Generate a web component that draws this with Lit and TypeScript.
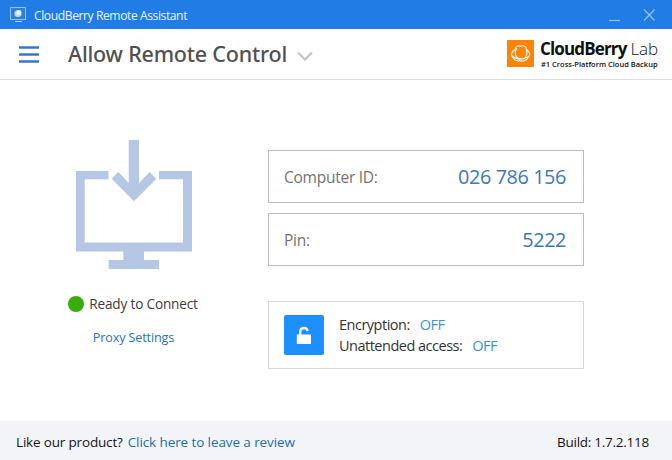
import { LitElement, html, css } from "lit";
import { customElement, property } from "lit/decorators.js";

@customElement("title-bar")
class TitleBar extends LitElement {
  static styles = css`
    :host { display: flex; align-items: center; height: 29px; box-sizing: border-box; padding: 0 16px 0 10px; background: #217ce5; color: #e4f5ff; }
    .app { width: 16px; height: 17px; margin-top: 1px; }
    .name { font-size: 12.2px; line-height: 18px; margin: 2px 0 0 8px; letter-spacing: -0.46px; white-space: nowrap; }
    .controls { margin-left: auto; width: 48px; height: 14px; margin-top: 1px; }
    svg { display: block; }
  `;
  render() {
    return html`
      <svg class="app" viewBox="0 0 16 17">
        <rect x="0.5" y="0.5" width="15" height="12" fill="#2d7fdc" stroke="#8cc4f4" />
        <path d="M5 14.500h7" stroke="#b5dcfa" />
        <circle cx="8" cy="6.500" r="3.6" fill="#b8dcf8" />
        <circle cx="9" cy="5.500" r="2.3" fill="#f1faff" />
      </svg>
      <span class="name">CloudBerry Remote Assistant</span>
      <svg class="controls" viewBox="0 0 48 14">
        <path d="M1 12.500h11" stroke="#8fc6fb" stroke-width="1.2" />
        <path d="M36 1.500l10.500 11M46.500 1.500l-10.500 11" stroke="#90c6f8" stroke-width="1.2" />
      </svg>
    `;
  }
}

@customElement("page-header")
class PageHeader extends LitElement {
  static styles = css`
    :host { display: flex; align-items: center; height: 51px; box-sizing: border-box; padding: 0 14px 0 19px; border-bottom: 1px solid #dedede; background: #fff; }
    svg { display: block; flex: none; }
    .menu { width: 20px; height: 17px; margin-top: 1px; }
    h1 { margin: 0 0 0 29px; font: 500 21.500px/30px "Noto Sans", "Open Sans", sans-serif; letter-spacing: -0.2px; color: #505050; white-space: nowrap; }
    .chevron { width: 16px; height: 10px; margin: 4px 0 0 10px; }
    .brand { display: flex; margin-left: auto; gap: 6px; }
    .logo { width: 27px; height: 27px; margin-top: 1px; }
    .words { display: flex; flex-direction: column; width: 118px; color: #111; white-space: nowrap; }
    .big { display: flex; gap: 4px; font: 400 17px/20px "Open Sans", sans-serif; }
    .big b { font-weight: 700; letter-spacing: -0.85px; }
    .tag { font: 600 7.500px/10px "Open Sans", sans-serif; padding-left: 1px; }
    .light { font-weight: 300; letter-spacing: -0.2px; }
  `;
  render() {
    return html`
      <svg class="menu" viewBox="0 0 20 17"><path d="M0 1.500h20M0 8.500h20M0 15.500h20" stroke="#3478c8" stroke-width="2.300" /></svg>
      <h1>Allow Remote Control</h1>
      <svg class="chevron" viewBox="0 0 16 10"><path d="M1 1.5l7 7 7-7" fill="none" stroke="#c4c4c4" stroke-width="2.200" /></svg>
      <div class="brand">
        <svg class="logo" viewBox="0 0 27 27">
          <rect width="27" height="27" fill="#ff8406" />
          <g fill="none" stroke="#fff" stroke-width="1.1" stroke-linecap="round">
            <path d="M8 9.500C8.500 6.500 11 5.300 13.500 6.200C17 4.800 19.500 6.800 19.800 10C23.300 12 23.500 16 21 17.300C20 20.300 16.500 21.500 13.500 20.700C10.500 21.500 7.500 20.300 6.500 18C3.500 16.300 3.800 11.500 8 9.500Z" />
            <path d="M9.500 8.500C8 11.500 8 15 9.500 17C12 19.500 16.500 19.500 19 17.500M19 9C20.500 12 20 15.500 17.500 18.500M5.500 15.500C8 18.800 13 20.800 21 17" />
          </g>
        </svg>
        <div class="words">
          <div class="big"><b>CloudBerry</b><span class="light">Lab</span></div>
          <div class="tag">#1 Cross-Platform Cloud Backup</div>
        </div>
      </div>
    `;
  }
}

@customElement("status-panel")
class StatusPanel extends LitElement {
  static styles = css`
    :host { display: flex; flex-direction: column; align-items: center; width: 267px; box-sizing: border-box; padding-top: 60px; }
    .screen { display: block; width: 116px; height: 130px; }
    .state { display: flex; align-items: center; margin-top: 24px; font-size: 13.600px; line-height: 20px; letter-spacing: -0.18px; color: #3c3c3c; white-space: nowrap; }
    .dot { width: 16px; height: 16px; margin-left: -1px; margin-right: 5px; border-radius: 50%; background: #36ad08; }
    .proxy { margin-top: 15px; font-size: 12.600px; line-height: 18px; letter-spacing: -0.13px; color: #2a71b8; white-space: nowrap; }
  `;
  render() {
    return html`
      <svg class="screen" viewBox="0 0 116 130">
        <path fill="#b5c7e4" d="M0 31H32.500V39.300H8.700V102.500H107V39.300H83V31H116V111.500H68V120H83V129H32.700V120H47.300V111.500H0Z" />
        <path fill="#b5c7e4" d="M52.700 0H63V43L73.700 32L80.300 38.700L58 61.200L35.700 38.700L42.300 32L52.700 43Z" />
      </svg>
      <div class="state"><span class="dot"></span><span>Ready to Connect</span></div>
      <div class="proxy">Proxy Settings</div>
    `;
  }
}

@customElement("credential-field")
class CredentialField extends LitElement {
  @property() label = "";
  @property() value = "";
  static styles = css`
    :host { display: flex; align-items: center; justify-content: space-between; height: 53px; box-sizing: border-box; padding: 0 17px 0 15px; border: 1px solid #bdbdbd; white-space: nowrap; }
    .label { font-size: 15.500px; line-height: 22px; letter-spacing: -0.25px; color: #737373; }
    .value { font-size: 19.800px; line-height: 26px; letter-spacing: -0.38px; color: #3b78be; }
  `;
  render() {
    return html`<span class="label">${this.label}</span><span class="value">${this.value}</span>`;
  }
}

@customElement("security-card")
class SecurityCard extends LitElement {
  static styles = css`
    :host { display: flex; align-items: center; height: 68px; box-sizing: border-box; padding: 0 15px; border: 1px solid #d8d8d8; }
    .lock { display: block; flex: none; width: 40px; height: 40px; margin-right: 15px; border-radius: 2px; background: #1e90fd; }
    .row { font-size: 14.500px; line-height: 21px; letter-spacing: -0.5px; color: #333; white-space: nowrap; }
    .off { color: #3b93dc; margin-left: 10px; letter-spacing: -0.5px; }
  `;
  render() {
    return html`
      <svg class="lock" viewBox="0 0 40 40">
        <rect x="12.800" y="19.500" width="14.200" height="9.500" rx="0.500" fill="#fff" />
        <path d="M16.200 20.500V16.500a3.800 3.800 0 0 1 7.500-.5" fill="none" stroke="#fff" stroke-width="2.300" />
      </svg>
      <div>
        <div class="row"><span>Encryption:</span><span class="off">OFF</span></div>
        <div class="row"><span>Unattended access:</span><span class="off">OFF</span></div>
      </div>
    `;
  }
}

@customElement("page-footer")
class PageFooter extends LitElement {
  static styles = css`
    :host { display: flex; align-items: center; height: 39px; box-sizing: border-box; padding: 3px 23px 0 16px; background: #f3f4f8; font-size: 13.500px; line-height: 20px; color: #151515; white-space: nowrap; }
    .ask { letter-spacing: -0.17px; }
    .review { margin-left: 5px; letter-spacing: -0.1px; color: #2070ae; }
    .build { margin-left: auto; letter-spacing: -0.26px; }
  `;
  render() {
    return html`
      <span class="ask">Like our product?</span><span class="review">Click here to leave a review</span>
      <span class="build">Build: 1.7.2.118</span>
    `;
  }
}

@customElement("app-root")
class AppRoot extends LitElement {
  static styles = css`
    :host { display: flex; flex-direction: column; width: 672px; height: 460px; overflow: hidden; background: #fff; font-family: "Open Sans", "Noto Sans", sans-serif; }
    main { display: flex; flex: 1; min-height: 0; }
    .details { display: flex; flex-direction: column; width: 316px; gap: 10px; padding: 70px 0 0 1px; }
    security-card { margin-top: 25px; }
  `;
  render() {
    return html`
      <title-bar></title-bar>
      <page-header></page-header>
      <main>
        <status-panel></status-panel>
        <section class="details">
          <credential-field label="Computer ID:" value="026 786 156"></credential-field>
          <credential-field label="Pin:" value="5222"></credential-field>
          <security-card></security-card>
        </section>
      </main>
      <page-footer></page-footer>
    `;
  }
}
